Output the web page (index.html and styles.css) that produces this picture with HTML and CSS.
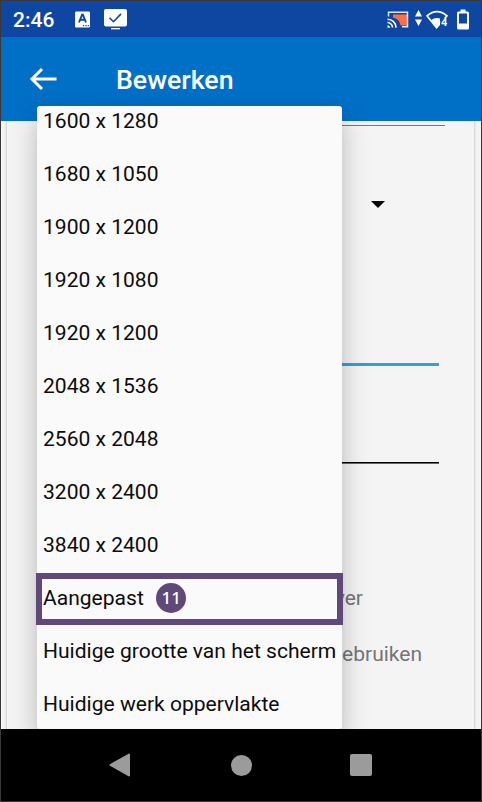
FILE: index.html
```html
<!DOCTYPE html>
<html lang="nl">
<head>
<meta charset="utf-8">
<title>Bewerken</title>
<link rel="stylesheet" href="styles.css">
</head>
<body>
<div class="phone">
  <header class="status">
    <span class="clock">2:46</span>
    <svg class="notes" width="54" height="22" viewBox="0 0 54 22">
      <rect x="0" y="3.500" width="15" height="16" rx="1.2" fill="#fff"/>
      <path d="M4 14.500L7.100 6.700h.8L11 14.500M5.200 11.700h4.600" fill="none" stroke="#0d47a1" stroke-width="1.9"/>
      <path d="M8 17.600h1.200M10.400 17.600h1.200M12.700 17.600h1.200" stroke="#0d47a1" stroke-width="1.2"/>
      <rect x="29" y="1" width="23" height="17.5" rx="2" fill="#fff"/>
      <path d="M36 20.700h9" stroke="#fff" stroke-width="1.300"/>
      <path d="M34.500 9.700l4 4 7.500-7.800" fill="none" stroke="#0d47a1" stroke-width="1.600"/>
    </svg>
    <svg class="signals" width="84" height="24" viewBox="0 0 84 24">
      <path d="M6 7.500h14v11h-6.500C13 14 10 11 6 10.700z" fill="#ff6e40"/>
      <path d="M1.500 9.500V5.300h19v14.500H15" fill="none" stroke="#dfe7f5" stroke-width="1.500"/>
      <path d="M.5 12.200a8.500 8.500 0 0 1 8.500 8.500M.5 15.500a5 5 0 0 1 5 5" fill="none" stroke="#fff" stroke-width="1.600"/>
      <path d="M.5 18.200A2.500 2.500 0 0 1 3 20.700H.5z" fill="#fff"/>
      <path d="M28 9.500l3.500-6.500L35 9.500zM28 12.500h7L31.500 19z" fill="#fff"/>
      <path d="M40 8.800Q50 .3 60 8.800L49.500 20.700z" fill="none" stroke="#fff" stroke-width="1.600"/>
      <path d="M43.800 13.200Q50 9 56 13.200L49.500 21.100z" fill="#fff"/>
      <path d="M53 11h8v11h-8z" fill="#0d47a1"/>
      <text class="generation" x="54" y="19.200">4</text>
      <path d="M51.500 14.500h2l-1 3-3 3.500z" fill="#fff"/>
      <path d="M73.500 2.500h5V5h-5z" fill="#fff"/>
      <rect x="71" y="5.500" width="10" height="16" rx=".5" fill="none" stroke="#fff" stroke-width="2"/>
      <path d="M71 16.500h10v5H71z" fill="#fff"/>
    </svg>
  </header>
  <div class="appbar">
    <svg width="28" height="24" viewBox="0 0 28 24"><path d="M27.500 12H3M13 2L3 12l10 10" fill="none" stroke="#fffff0" stroke-width="3"/></svg>
    <h1>Bewerken</h1>
  </div>
  <main class="content">
    <div class="card">
      <div class="line top"></div>
      <div class="caret"></div>
      <div class="line focused"></div>
      <div class="line plain"></div>
      <p class="option first">server</p>
      <p class="option second">gebruiken</p>
    </div>
  </main>
  <nav class="nav">
    <svg width="22" height="24" viewBox="0 0 22 24"><path d="M20 1.500v21L1.500 12z" fill="#9b9b9b" stroke="#9b9b9b" stroke-width="2" stroke-linejoin="round"/></svg>
    <span class="home"></span>
    <span class="recent"></span>
  </nav>
  <div class="clip">
    <div class="popup">
      <ul>
        <li>1600 x 1280</li>
        <li>1680 x 1050</li>
        <li>1900 x 1200</li>
        <li>1920 x 1080</li>
        <li>1920 x 1200</li>
        <li>2048 x 1536</li>
        <li>2560 x 2048</li>
        <li>3200 x 2400</li>
        <li>3840 x 2400</li>
        <li>Aangepast<span class="badge">11</span></li>
        <li>Huidige grootte van het scherm</li>
        <li>Huidige werk oppervlakte</li>
      </ul>
    </div>
    <div class="highlight"></div>
  </div>
</div>
</body>
</html>
```
FILE: styles.css
```css
* { box-sizing: border-box; }
body { margin: 0; font-family: Roboto, "Liberation Sans", sans-serif; }
.phone {
  position: relative;
  display: flex;
  flex-direction: column;
  width: 482px;
  height: 802px;
  border: 1px solid #38383a;
  overflow: hidden;
}
.status {
  display: flex;
  align-items: center;
  height: 36px;
  padding: 0 10px 0 12px;
  background: #0d47a1;
}
.clock {
  width: 62px;
  padding-top: 2px;
  color: #fff;
  font-size: 21px;
  font-weight: 500;
}
.signals { margin-left: auto; }
.generation { fill: #fff; font-size: 11px; font-weight: 700; }
.appbar {
  display: flex;
  align-items: center;
  gap: 59px;
  height: 84px;
  padding-left: 28px;
  background: #006fc6;
}
.appbar h1 {
  margin: 2px 0 0;
  color: #fff;
  font-size: 26.7px;
  font-weight: 500;
}
.content { height: 608px; padding: 0 6px 0 5px; background: #f4f4f4; overflow: hidden; }
.card {
  height: 100%;
  padding: 4px 0 0 35px;
  border: solid #d9d9d9;
  border-width: 0 1px;
  box-shadow: 0 0 3px #ddd;
  background: #f4f4f4;
}
.line { width: 397px; }
.top { width: 403px; height: 1px; background: #777; }
.caret {
  width: 14px;
  height: 7px;
  margin: 75px 0 0 329px;
  background: #000;
  clip-path: polygon(0 0, 100% 0, 50% 100%);
}
.focused { height: 3px; margin-top: 155px; background: #35a0d3; }
.plain { height: 2px; margin-top: 96px; background: linear-gradient(#000 50%, #666 50%); }
.option {
  margin: 0;
  color: #757575;
  font-size: 21px;
  line-height: 30px;
  text-align: right;
}
.first { width: 321px; margin-top: 119px; }
.second { width: 380px; margin-top: 26px; }
.nav {
  display: flex;
  align-items: center;
  height: 72px;
  background: #000;
  padding-left: 108px;
}
.home { width: 21px; height: 21px; margin-left: 99.5px; border-radius: 50%; background: #9b9b9b; }
.recent { width: 22px; height: 22px; margin-left: 98.5px; border-radius: 2px; background: #9b9b9b; }
.clip { position: absolute; inset: 0 0 72px; overflow: hidden; }
.popup {
  width: 305px;
  height: 623px;
  margin: 105px 0 0 36px;
  border-radius: 3px;
  background: #fafafa;
  box-shadow: 0 12px 28px rgba(0, 0, 0, .23), 0 3px 8px rgba(0, 0, 0, .04);
  overflow: hidden;
}
.popup ul { margin: -12px 0 0; padding: 0; list-style: none; }
.popup li {
  display: flex;
  align-items: center;
  height: 53px;
  padding-left: 6px;
  color: #0c0c0c;
  font-size: 21.05px;
  white-space: nowrap;
}
.badge {
  display: flex;
  align-items: center;
  justify-content: center;
  width: 30px;
  height: 30px;
  margin-left: 12.5px;
  padding-bottom: 1px;
  border-radius: 50%;
  background: #60497a;
  color: #fff;
  font: 500 17px "Noto Sans", sans-serif;
}
.highlight {
  position: absolute;
  left: 35px;
  top: 572px;
  width: 307px;
  height: 52px;
  border: 6px solid #60497a;
}
```
